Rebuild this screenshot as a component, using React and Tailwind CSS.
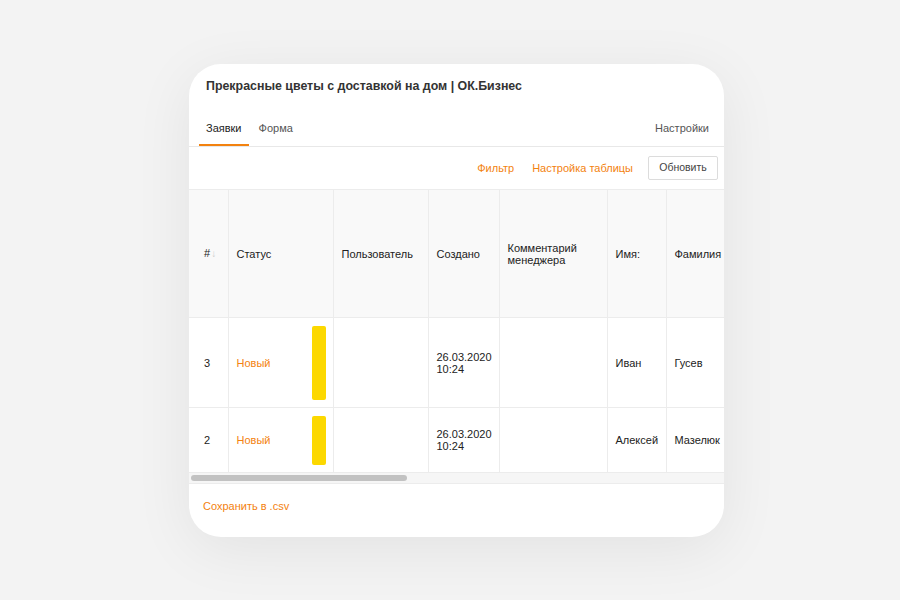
import React from 'react';

const cols = [39, 105, 95, 71, 108, 59, 90];

const rows = [
  { id: 3, status: 'Новый', date: '26.03.2020', time: '10:24', name: 'Иван', last: 'Гусев', h: 'h-[90px]', bar: 'h-[74px]' },
  { id: 2, status: 'Новый', date: '26.03.2020', time: '10:24', name: 'Алексей', last: 'Мазелюк', h: 'h-[65px]', bar: 'h-[49px]' },
];

// --- MAIN APP COMPONENT ---
export default function App() {
  return (
    <div className="w-[900px] h-[600px] bg-[#f3f3f3] pt-[64px] pl-[189px] font-['Liberation_Sans',Arial,sans-serif] text-[#222]">
      <div className="w-[535px] h-[473px] bg-white rounded-[32px] overflow-hidden shadow-[0_12px_60px_rgba(0,0,0,0.07)] flex flex-col">
        {/* title */}
        <div className="pt-[15px] px-[17px] text-[12.4px] leading-[15px] font-bold text-[#333]">
          Прекрасные цветы с доставкой на дом | ОК.Бизнес
        </div>

        {/* tabs */}
        <div className="mt-[17px] h-[36px] border-b border-[#e8e8e8] flex items-stretch pl-[10px] pr-[15px] text-[11px]">
          <div className="px-[7px] flex items-center border-b-2 border-[#f3820f] text-[#222] pt-[2px]">Заявки</div>
          <div className="ml-[3px] px-[7px] flex items-center text-[#555] border-b-2 border-transparent pt-[2px]">Форма</div>
          <div className="ml-auto flex items-center text-[#555] border-b-2 border-transparent pt-[2px]">Настройки</div>
        </div>

        {/* toolbar */}
        <div className="h-[42px] flex items-center justify-end pr-[6px] text-[11px]">
          <span className="text-[#f3820f]">Фильтр</span>
          <span className="ml-[18px] text-[#f3820f]">Настройка таблицы</span>
          <button className="ml-[15px] w-[70px] h-[24px] border border-[#dcdcdc] bg-white text-[10.5px] text-[#444] rounded-[2px]">
            Обновить
          </button>
        </div>

        {/* table */}
        <div className="overflow-hidden">
          <table className="table-fixed border-collapse text-[11px] leading-[12px] w-[567px]">
            <colgroup>
              {cols.map((w, i) => (
                <col key={i} style={{ width: w }} />
              ))}
            </colgroup>
            <thead>
              <tr className="h-[128px] bg-[#f9f9f9] text-left font-normal border-t border-b border-[#ececec]">
                <th className="font-normal pl-[15px] border-r border-[#ececec]">
                  #<span className="text-[#ccc] text-[10px] ml-[1px]">↓</span>
                </th>
                <th className="font-normal pl-[8px] border-r border-[#ececec]">Статус</th>
                <th className="font-normal pl-[8px] border-r border-[#ececec]">Пользователь</th>
                <th className="font-normal pl-[8px] border-r border-[#ececec]">Создано</th>
                <th className="font-normal pl-[8px] pr-[6px] border-r border-[#ececec]">Комментарий менеджера</th>
                <th className="font-normal pl-[8px] border-r border-[#ececec]">Имя:</th>
                <th className="font-normal pl-[8px] border-r border-[#ececec]">Фамилия</th>
              </tr>
            </thead>
            <tbody>
              {rows.map((r) => (
                <tr key={r.id} className={`${r.h} border-b border-[#ececec]`}>
                  <td className="pl-[15px] border-r border-[#ececec]">{r.id}</td>
                  <td className="pl-[8px] pr-[7px] border-r border-[#ececec]">
                    <div className="flex items-center justify-between">
                      <span className="text-[#f3820f]">{r.status}</span>
                      <div className={`w-[14px] ${r.bar} bg-[#fcd800] rounded-[2px]`} />
                    </div>
                  </td>
                  <td className="border-r border-[#ececec]" />
                  <td className="pl-[8px] border-r border-[#ececec]">
                    {r.date}
                    <br />
                    {r.time}
                  </td>
                  <td className="border-r border-[#ececec]" />
                  <td className="pl-[8px] border-r border-[#ececec]">{r.name}</td>
                  <td className="pl-[8px] border-r border-[#ececec]">{r.last}</td>
                </tr>
              ))}
            </tbody>
          </table>
        </div>

        {/* scrollbar */}
        <div className="h-[11px] bg-[#f6f6f6] border-b border-[#ececec] flex items-center pl-[2px]">
          <div className="w-[216px] h-[6px] rounded-full bg-[#c2c2c2]" />
        </div>

        {/* footer */}
        <div className="pt-[14px] pl-[14px] text-[11px] text-[#f3820f]">Сохранить в .csv</div>
      </div>
    </div>
  );
}
